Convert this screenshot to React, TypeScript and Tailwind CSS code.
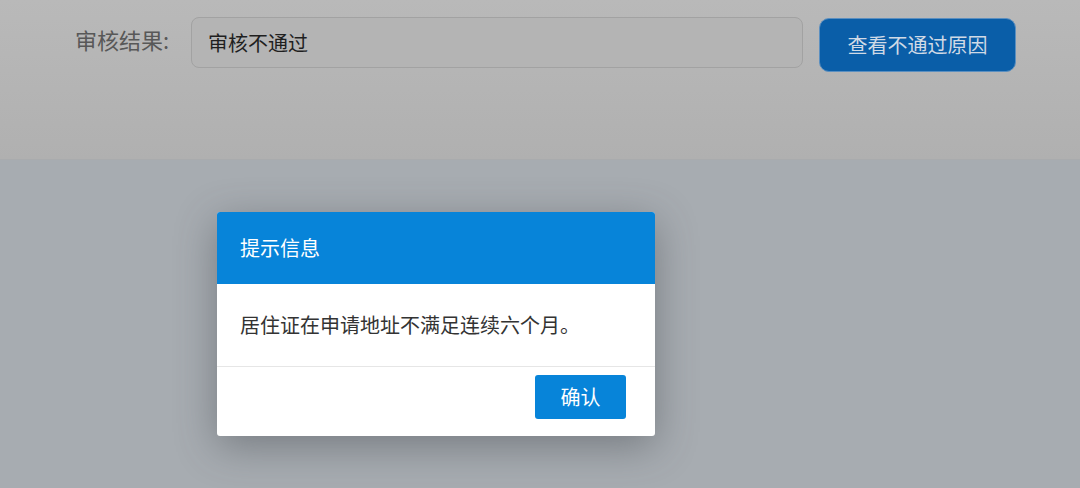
import React from "react";

const font = "font-['Noto_Sans_CJK_SC','Noto_Sans',sans-serif]";

const App = () => {
    return (
        <div className={`relative w-full h-[488px] overflow-hidden bg-[#a7acb1] ${font}`}>
            {/* 상단 폼 영역 */}
            <div className="h-[160px] bg-linear-to-b from-[#b9b9b9] to-[#b0b0b0] border-b border-[#a9abad]">
                <div className="flex items-start pt-[17px] pl-[75px]">
                    <span className="w-[116px] h-[44px] flex items-center text-[22px] text-[#585858]">
                        审核结果:
                    </span>
                    <div className="w-[612px] h-[51px] flex items-center pl-[16px] rounded-[8px] border border-[#a2a2a2] bg-[#b4b4b4] text-[20px] text-[#1f1f1f]">
                        审核不通过
                    </div>
                    <button className="ml-[16px] mt-[1px] w-[197px] h-[54px] rounded-[10px] bg-[#0a5ea8] border border-[#5b8fc0] text-[20px] text-[#d0dae6] flex items-center justify-center">
                        查看不通过原因
                    </button>
                </div>
            </div>

            {/* 提示 弹窗 */}
            <div className="absolute left-[217px] top-[212px] w-[438px] rounded-[3px] overflow-hidden bg-white shadow-[0_10px_40px_rgba(60,65,70,0.45)]">
                <div className="h-[72px] bg-[#0784d9] flex items-center pl-[23px] text-[20px] text-white">
                    提示信息
                </div>
                <div className="h-[83px] flex items-center pl-[23px] text-[20px] text-[#333333] border-b border-[#e6e6e6]">
                    居住证在申请地址不满足连续六个月。
                </div>
                <div className="h-[69px] flex justify-end items-start pt-[8px] pr-[29px]">
                    <button className="w-[91px] h-[44px] rounded-[3px] bg-[#0784d9] text-[20px] text-white flex items-center justify-center">
                        确认
                    </button>
                </div>
            </div>
        </div>
    );
};

export default App;
